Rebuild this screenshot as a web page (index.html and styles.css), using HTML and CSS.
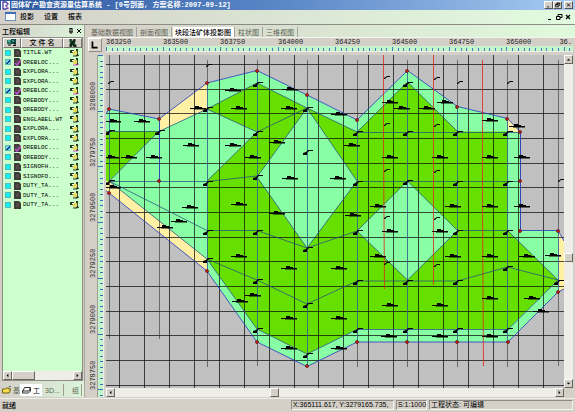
FILE: index.html
```html
<!DOCTYPE html>
<html lang="zh-CN">
<head>
<meta charset="utf-8">
<title>固体矿产勘查资源量估算系统</title>
<link rel="stylesheet" href="styles.css">
</head>
<body>
<div class="app">
  <header class="titlebar">
    <svg class="logo" viewBox="0 0 9 9"><rect width="9" height="9" fill="#f4f4fa"/><path d="M2 1h3l2 2-2 2 2 2-2 1H2z" fill="none" stroke="#5040a0" stroke-width="1.3"/><path d="M4 4l4 4" stroke="#c070a0"/></svg>
    <h1>固体矿产勘查资源量估算系统 - [0号剖面, 方案名称:2007-09-12]</h1>
    <div class="winbtns">
      <button aria-label="最小化"><svg viewBox="0 0 8 8"><path d="M2 6.5h3" stroke="#000"/></svg></button><button aria-label="还原"><svg viewBox="0 0 8 8"><path d="M3 3V1.500h4v3H5M1.500 3.500h3.500v3H1.500zM1 3.500h4M3 1.500h4" fill="none" stroke="#000"/></svg></button><button class="apart" aria-label="关闭"><svg viewBox="0 0 8 8"><path d="M2 2l4 4M6 2L2 6" stroke="#000" stroke-width="1.2"/></svg></button>
    </div>
  </header>
  <nav class="menubar">
    <svg class="doc" viewBox="0 0 11 9"><rect x=".5" y=".5" width="10" height="8" fill="#fff" stroke="#6d8fc0"/><path d="M0 1h11" stroke="#3f6db5" stroke-width="2"/></svg>
    <button>投影</button><button>设置</button><button>报表</button>
    <div class="winbtns flat">
      <button aria-label="最小化窗口"><svg viewBox="0 0 8 8"><path d="M2 6.500h3" stroke="#000"/></svg></button><button aria-label="还原窗口"><svg viewBox="0 0 8 8"><path d="M3 3V1.500h4v3H5M1.500 3.500h3.500v3H1.500z" fill="none" stroke="#000"/></svg></button><button aria-label="关闭窗口"><svg viewBox="0 0 8 8"><path d="M2 2l4 4M6 2L2 6" stroke="#000" stroke-width="1.200"/></svg></button>
    </div>
  </nav>
  <main class="work">
    <aside class="side">
      <div class="side-title"><h2>工程编辑</h2>
        <button aria-label="固定"><svg viewBox="0 0 8 8"><path d="M3 1v4M5 1v4M2 5h4M4 5v2M3 1.500h2" stroke="#000" fill="none"/></svg></button>
        <button aria-label="关闭面板"><svg viewBox="0 0 8 8"><path d="M2 2l4 4M6 2L2 6" stroke="#000"/></svg></button>
      </div>
      <div class="list">
        <table>
          <thead><tr>
            <th class="c-check"><svg class="head-icon" viewBox="0 0 10 8"><path d="M0 1h5v4H0z" fill="#287868"/><path d="M4 0h5v5H4z" fill="#104848"/><path d="M1 2h2M5 2h2" stroke="#6ee0c0"/><path d="M1 6h3M6 6.500h3M8 4v3" stroke="#000"/></svg></th>
            <th>文 件 名</th>
            <th class="c-type"><svg class="head-icon" viewBox="0 0 9 8"><path d="M1 0h2l1 2 1-2h2v3L6 4l2 2v2H5L4 6 3 8H1V5l1-1-1-1z" fill="#102818"/><path d="M2 2h1M6 5h1" stroke="#50b080"/></svg></th>
          </tr></thead>
          <tbody id="files"></tbody>
        </table>
        <div class="hscroll">
          <button aria-label="向左"><svg viewBox="0 0 8 8"><path d="M5 2v4L3 4z"/></svg></button><span class="thumb wide"></span><span class="rest"></span><button aria-label="向右"><svg viewBox="0 0 8 8"><path d="M3 2v4l2-2z"/></svg></button>
        </div>
      </div>
      <div class="side-tabs">
        <button><svg class="tab-icon" viewBox="0 0 9 8"><path d="M.5 7V3h3l1-1h2v1L9 3 7 7z" fill="#f4dc50" stroke="#706010"/><path d="M7 1l2-1" stroke="#404040"/></svg>基</button>
        <button class="on"><svg class="tab-icon" viewBox="0 0 9 8"><path d="M2.500 1.500h6L7 5H1zM.5 4.500V7h6l2-2V2" fill="#fff" stroke="#303030"/></svg>工</button>
        <button class="bar">3D...</button>
        <button class="last">组</button>
      </div>
    </aside>
    <section class="view">
      <div class="tabs">
        <button>基础数据视图</button><button>剖面视图</button><button class="on">块段法矿体投影图</button><button>柱状图</button><button>三维视图</button>
      </div>
      <div class="plot">
        <div class="corner"><svg viewBox="0 0 14 14"><path d="M4 3v7h6" fill="none" stroke="#000" stroke-width="2"/></svg></div>
        <svg class="ruler-x" id="rulerX" viewBox="0 0 467 18" preserveAspectRatio="xMinYMin slice"></svg>
        <svg class="ruler-y" id="rulerY" viewBox="0 0 18 342" preserveAspectRatio="xMinYMin slice"></svg>
        <svg class="map" viewBox="106 55 458 334" preserveAspectRatio="xMinYMin slice">
          <defs>
            <path id="tag" d="M-8 0h5v-2h4v1h3v1h4v1.500H-4V1h-4z"/>
            <path id="node" d="M-4 2l3-1 2-2h5v1H2L0 2v2h-4z"/>
            <path id="tick" d="M-1 1l3-2h3v1H2L0 2h-1z"/>
            <circle id="dot" r="1.500" fill="#d81818" stroke="#501010" stroke-width=".7"/>
          </defs>
          <rect x="106" y="55" width="458" height="334" fill="#c0c0c0"/>
          <path class="pale" d="M106 114L109 109 159 119 207 83 257 70.500 307 95 357 120 407.500 70.500 457.500 106.500 507.500 118.500 520.500 132V230.500H558V292L508 342H357L307 366.500 257 342 207 271 106 190z"/>
          <path class="sand" d="M159 119L207 83V109L159 131zM109 181L207 259V271L106 190.500V181zM507.500 118.500L520.500 132H507.500zM558 230.500L564 241V289L558 292z"/>
          <path class="ore" d="M106 131H159L109 181H106zM207 109L257 83 307 108 357 132 407.500 82 457.500 131.500H507.500V230.500L558 280 508 329H357L307 354 257 329 207 259V181L257 132z"/>
          <path class="pale" d="M307 108L357 181 307 248 257 177zM407.500 181L457.500 230.500 407.500 280 357 231z"/>
          <path class="grid" id="grid"/>
          <path class="holes" d="M109.500 55V339M159.500 55V339M207.500 60V367M257.500 60V366M307.500 60V366M357.500 60V367M407.500 60V367M457.500 60V367M507.500 60V367M558.500 60V366"/>
          <path class="blue" d="M109.500 109V181M207.500 83V271M257.500 71V342M307.500 95V366M357.500 120V342M407.500 71V342M457.500 107V342M507.500 119V342M558.500 231V292"/>
          <path class="edge" d="M106 114L109 109 159 119 207 83 257 70.500 307 95 357 120 407.500 70.500 457.500 106.500 507.500 118.500 520.500 132V230.500H558L564 241M564 289L558 292 508 342H357L307 366.500 257 342 207 271 106 190.500M520.500 132V230M159.500 119V181"/>
          <path class="inner" d="M106 131.500H159L207 109 257 83 307 108 357 132 407.500 82 457.500 131.500M357 132.500H520M159 131L109 181.500H207L257 176M109 181L207 230.500H257L307 248 357 231M457.500 230.500H507.500L558 280 508 329.500H357L307 354 257 329 207 259 109 181M207 109L257 132 207 181M257 132L307 108 357 181 307 248 257 177 307 108M357 181.500H520M357 231L407.500 280 457.500 230.500 407.500 181 357 231M207 259L257 280 307 304 357 281H457.500L507.500 267 558 280"/>
          <path class="red" d="M383.500 55V145L384.500 289M433.500 55V285M482.500 60V210L483.500 366"/>
          <path d="M106 388.500H564" stroke="#222"/>
          <g id="marks"></g>
        </svg>
        <div class="vscroll">
          <button aria-label="向上滚动"><svg viewBox="0 0 8 8"><path d="M2 5h4L4 3z"/></svg></button><span class="space-a"></span><span class="thumb"></span><span class="space-b"></span><button aria-label="向下滚动"><svg viewBox="0 0 8 8"><path d="M2 3h4L4 5z"/></svg></button>
        </div>
        <div class="hscroll main-h">
          <button aria-label="向左滚动"><svg viewBox="0 0 8 8"><path d="M5 2v4L3 4z"/></svg></button><span class="space-c"></span><span class="thumb"></span><span class="space-d"></span><button aria-label="向右滚动"><svg viewBox="0 0 8 8"><path d="M3 2v4l2-2z"/></svg></button>
        </div>
      </div>
    </section>
  </main>
  <footer class="status">
    <span class="ready">就绪</span>
    <span class="cell pos">X:365111.617, Y:3279165.735,</span>
    <span class="cell scale">S:1:1000</span>
    <span class="cell state">工程状态: 可编辑</span>
  </footer>
</div>
<script src="script.js"></script>
</body>
</html>
```
FILE: styles.css
```css
* { box-sizing: border-box; }
body {
  margin: 0;
  font: 7px/9px "Liberation Sans", "Noto Sans CJK SC", sans-serif;
  color: #000;
  background: #d4d0c8;
}
button {
  font: inherit;
  color: inherit;
  margin: 0;
  padding: 0;
  border: 0;
  background: none;
}
svg { display: block; }
h1, h2 { margin: 0; font-size: 7px; white-space: nowrap; }
.app { height: 100vh; display: flex; flex-direction: column; overflow: hidden; }

.titlebar {
  flex: none;
  height: 10px;
  display: flex;
  align-items: center;
  padding: 0 2px 0 1px;
  color: #fff;
  background: linear-gradient(90deg, #2d58a0, #5c88c8 50%, #a6caf0);
}
.logo { width: 9px; height: 9px; margin-right: 1px; }
h1 { font-family: "Liberation Mono", "Noto Sans CJK SC", monospace; }
.winbtns { margin-left: auto; display: flex; }
.winbtns button {
  width: 9px;
  height: 8px;
  background: #d4d0c8;
  border: 1px solid;
  border-color: #fff #555 #555 #fff;
}
.winbtns svg { width: 7px; height: 6px; }
.winbtns .apart { margin-left: 2px; }
.winbtns.flat button { background: none; border: 0; }
.winbtns.flat svg { width: 8px; height: 8px; }

.menubar {
  flex: none;
  height: 15px;
  display: flex;
  align-items: center;
  gap: 10px;
  padding: 0 2px 1px 5px;
  border-bottom: 1px solid #8c8c84;
  background: linear-gradient(90deg, #d4d0c8, #e2fbe0);
}
.menubar > button { font-weight: 500; }
.doc { width: 11px; height: 9px; margin-right: -6px; }

.work { flex: 1; min-height: 0; display: grid; grid-template-columns: 85px 1fr; gap: 3px; }
.side { display: flex; flex-direction: column; min-height: 0; border-right: 1px solid #a8a69e; }
.side-title {
  height: 12px;
  display: flex;
  align-items: center;
  padding: 0 1px 0 2px;
  background: linear-gradient(90deg, #d4d0c8, #dcf4da);
}
.side-title h2 { margin-right: auto; font-weight: 500; }
.side-title svg { width: 8px; height: 8px; }
.list {
  flex: 1;
  min-height: 0;
  margin: 0 1px 0 2px;
  display: flex;
  flex-direction: column;
  justify-content: space-between;
  background: #ccffcc;
  border: 1px solid #8c8c84;
}
table { width: 100%; border-collapse: separate; border-spacing: 0; table-layout: fixed; }
th {
  height: 10px;
  padding: 0;
  line-height: 8px;
  font-weight: 500;
  background: #d4d0c8;
  border: 1px solid;
  border-color: #fff #77756f #77756f #fff;
}
.c-check { width: 18px; }
.c-type { width: 19px; }
.head-icon { width: 10px; height: 8px; margin: 0 auto; }
td { height: 9px; padding: 0; white-space: nowrap; line-height: 9px; }
tr:nth-child(even) td { height: 10px; }
td input {
  appearance: none;
  display: block;
  width: 6px;
  height: 6px;
  margin: 0 0 0 2px;
  background: #10f0f0;
  border: 1px solid #60b8b8;
}
td input:checked { background: #70d8e0 linear-gradient(135deg, transparent 40%, #123c90 40% 75%, transparent 75%); }
.box { display: flex; align-items: center; gap: 3px; }
.file-icon { width: 7px; height: 8px; }
.type-icon { width: 9px; height: 8px; margin-left: 7px; }
label { display: block; padding-left: 2px; font-family: "Liberation Mono", monospace; font-size: 6px; }

.hscroll { display: flex; height: 9px; background: #efede8; }
.hscroll button, .vscroll button, .thumb {
  flex: none;
  width: 9px;
  height: 9px;
  background: #d4d0c8;
  border: 1px solid;
  border-color: #fff #66645e #66645e #fff;
}
.hscroll svg, .vscroll svg { width: 7px; height: 7px; }
.thumb.wide { width: 23px; }
.rest { flex: 1; }
.side-tabs {
  flex: none;
  height: 16px;
  padding: 3px 2px 1px;
  display: flex;
  color: #5c6856;
  background: linear-gradient(90deg, #d4d0c8, #dcf4da);
}
.side-tabs button { display: flex; align-items: center; gap: 2px; }
.side-tabs .on { padding: 0 2px; color: #000; background: #fff; }
.side-tabs .bar { padding: 0 3px; border-right: 1px solid #9c9c90; }
.side-tabs .last { margin-left: auto; padding-right: 2px; border-right: 1px solid #9c9c90; }
.tab-icon { width: 9px; height: 8px; }

.view { display: flex; flex-direction: column; min-width: 0; min-height: 0; }
.tabs {
  flex: none;
  height: 13px;
  padding: 2px 0 0 1px;
  display: flex;
  color: #5c6054;
  background: linear-gradient(90deg, #d4d0c8, #e0fadc);
  border-bottom: 1px solid #f4f4f0;
}
.tabs button { padding: 0 3px 0 2px; border-right: 1px solid #a4a498; margin-right: 1px; }
.tabs .on { color: #000; background: #fff; font-weight: 500; }
.plot {
  flex: 1;
  min-height: 0;
  display: grid;
  grid-template-columns: 18px 1fr 9px;
  grid-template-rows: 17px 1fr 9px;
  padding-right: 2px;
}
.corner { width: 14px; height: 14px; background: #dcd8d0; border: 1px solid; border-color: #fff #8c8c84 #8c8c84 #fff; }
.corner svg { width: 12px; height: 12px; }
.ruler-x { grid-column: 2 / 4; width: 100%; height: 17px; }
.ruler-y { grid-row: 2 / 4; width: 18px; height: 100%; }
.plot text { font-family: "Liberation Mono", monospace; font-size: 7px; fill: #222; }
.plot .end { text-anchor: end; }
.plot .ruler-y, .map { min-height: 0; overflow: hidden; }
.map { width: 100%; height: 100%; }
.vscroll { display: flex; flex-direction: column; background: #efede8; }
.main-h { grid-column: 2; }
.space-a { flex: 190; }
.space-b { flex: 118; }
.space-c { flex: 155; }
.space-d { flex: 276; }

.pale { fill: #88ffa4; }
.sand { fill: #fff0a4; }
.ore { fill: #66e000; }
.grid, .holes, .blue, .edge, .inner, .red { fill: none; stroke-width: 1; }
.grid { stroke: #101010; stroke-opacity: .75; }
.holes { stroke: #303030; stroke-opacity: .6; }
.blue { stroke: #3070b0; stroke-opacity: .65; }
.edge { stroke: #3040c0; stroke-opacity: .85; }
.inner { stroke: #284c80; stroke-opacity: .75; }
.red { stroke: #e02818; stroke-opacity: .8; }

.status {
  flex: none;
  height: 14px;
  margin-top: 1px;
  padding: 1px 2px 2px;
  display: flex;
  align-items: center;
  gap: 2px;
  border-top: 1px solid #efede8;
}
.ready { margin-right: auto; font-weight: 500; }
.cell { height: 10px; padding-left: 1px; border: 1px solid; border-color: #8c8c84 #f4f4f0 #f4f4f0 #8c8c84; line-height: 8px; white-space: nowrap; }
.pos { width: 103px; }
.scale { width: 31px; }
.state { width: 144px; }
```
FILE: script.js
```js
const files = ["TITLE.WT", "OREBLOC...", "EXPLORA...", "EXPLORA...", "OREBLOC...", "OREBODY...", "OREBODY...", "ENGLABEL.WT", "EXPLORA...", "EXPLORA...", "OREBLOC...", "OREBODY...", "SIGNOFH...", "SIGNOFO...", "DUTY_TA...", "DUTY_TA...", "DUTY_TA..."];
const checked = [1, 4, 10];
document.getElementById("files").innerHTML = files.map((name, i) => {
  const on = checked.includes(i);
  const pen = on ? '<path d="M1 5l2 2 4-5" fill="none" stroke="#c050d0" stroke-width="1.5"/>' : "";
  const foot = on ? "#d050d0" : "#203820";
  return `<tr><td><div class="box"><input type="checkbox" id="f${i}"${on ? " checked" : ""}><svg class="file-icon" viewBox="0 0 7 8"><path d="M0 0h5l2 2v6H0z" fill="#403c3c"/><path d="M2 3h3M2 5h3" stroke="#806860" stroke-width=".6"/>${pen}</svg></div></td><td><label for="f${i}">${name}</label></td><td><svg class="type-icon" viewBox="0 0 9 8"><path d="M0 1h4v3H0zM6 0h2v7H6z" fill="#203820"/><circle cx="5" cy="4" r="2.4" fill="#e8dc60"/><path d="M2 2h2v1H2z" fill="#fff"/><path d="M3 7h4l2-1" stroke="${foot}" fill="none"/></svg></td></tr>`;
}).join("");

// Survey grid lines
let d = "";
for (let i = 0; i < 18; i++) d += `M${Math.round(120 + i * 24.93) - .5} 55V388`;
for (let i = 0; i < 14; i++) d += `M106 ${Math.round(64 + i * 24.68) + .5}H564`;
document.getElementById("grid").setAttribute("d", d);

const tags = [[113,121],[142,121],[233,90],[198,108],[239,108],[191,145],[233,145],[111,157],[129,157],[154,157],[253,157],[113,187],[190,207],[239,204],[179,221],[165,227],[239,256],[240,301],[253,295],[290,89],[289,108],[339,114],[277,142],[352,145],[290,178],[338,178],[277,213],[353,215],[390,102],[402,108],[390,157],[378,206],[289,268],[339,268],[289,318],[339,318],[289,348],[339,348],[390,231],[378,256],[390,305],[389,336],[445,102],[427,108],[490,120],[517,126],[440,157],[490,157],[522,157],[453,206],[490,206],[522,206],[440,231],[453,256],[490,256],[527,256],[553,255],[440,305],[490,298],[532,298],[541,311],[440,336],[490,336]];
const nodes = [[109,131],[159,131],[207,108],[257,83],[257,132],[307,108],[307,151],[357,132],[407,83],[407,132],[457,132],[507,132],[109,181],[207,182],[257,176],[357,182],[407,181],[457,182],[507,182],[207,231],[207,259],[257,231],[307,248],[357,231],[457,231],[507,231],[257,280],[307,304],[357,281],[407,281],[457,281],[507,267],[558,281],[257,329],[307,354],[357,329],[407,329],[457,329],[507,329]];
const ticks = [[109,82],[207,65],[385,77],[385,124],[385,170],[385,217],[385,263],[435,78],[435,125],[435,171],[435,218],[435,265],[458,82],[508,82],[559,180]];
const dots = [[109,109],[159,119],[207,83],[257,71],[307,95],[357,120],[407,71],[457,107],[507,119],[520,132],[520,181],[520,231],[558,231],[558,292],[508,342],[457,342],[407,342],[357,342],[307,366],[257,342],[207,271],[109,193],[159,181]];
const put = (id, list) => list.map(([x, y]) => `<use href="#${id}" x="${x}" y="${y}"/>`).join("");
document.getElementById("marks").innerHTML = put("dot", dots) + put("tag", tags) + put("node", nodes) + put("tick", ticks);

// Top ruler: label every ten divisions
let x = '<rect y="8" width="467" height="5" fill="#c4f4cc"/><path d="M0 13.500H467" stroke="#f0eee8"/>';
for (let i = 0; i <= 81; i++) {
  const px = Math.round(i * 5.72);
  x += `<path d="M${px + .5} ${i % 10 ? 10 : 9}V13" stroke="#4080b0"/>`;
}
["363250", "363500", "363750", "364000", "364250", "364500", "364750", "365000"].forEach((t, i) => {
  x += `<text x="${Math.round(i * 57.2)}" y="6">${t}</text>`;
});
x += '<text class="end" x="466" y="6">36.</text>';
document.getElementById("rulerX").innerHTML = x;

// Side ruler, labels read upwards
let y = '<rect x="10" width="5" height="342" fill="#c4f4cc"/><path d="M9.500 0V342" stroke="#9c9a94"/><path d="M15.500 0V342" stroke="#f0eee8"/>';
for (let i = 0; i <= 61; i++) {
  const py = Math.round(i * 5.57);
  y += `<path d="M${i % 10 ? 12 : 10} ${py + .5}H15" stroke="#3070c0"/>`;
}
["3280000", "3279750", "3279500", "3279250", "3279000", "3278750"].forEach((t, i) => {
  y += `<text transform="translate(7 ${Math.round(56 + i * 55.7)}) rotate(-90)">${t}</text>`;
});
document.getElementById("rulerY").innerHTML = y;
```
